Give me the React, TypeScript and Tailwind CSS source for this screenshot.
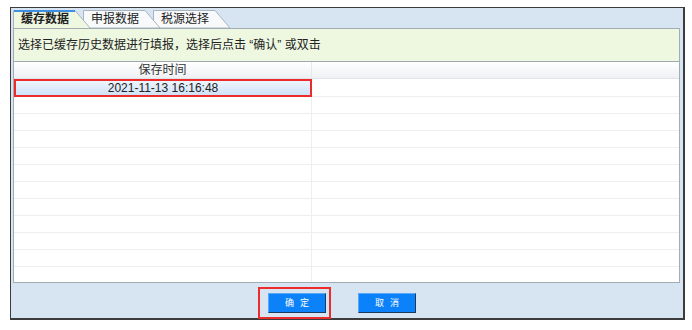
import React from 'react';

const tabs = ['缓存数据', '申报数据', '税源选择'];

function Tab({ label, active, z }: { label: string; active: boolean; z: string }) {
  return (
    <div className={`relative h-[18px] w-[78px] -mr-[8px] ${z}`}>
      <svg className="absolute inset-0" width="78" height="18" viewBox="0 0 78 18">
        <polygon
          points="0.5,18 0.5,0.5 62,0.5 77,18"
          fill={active ? '#eef8e1' : '#f7f9fb'}
          stroke="#a9b4bf"
          strokeWidth="1"
        />
        {active && <line x1="1" y1="1" x2="62" y2="1" stroke="#3d8fe0" strokeWidth="2" />}
        {active && <line x1="1" y1="18" x2="76" y2="18" stroke="#eef8e1" strokeWidth="2" />}
      </svg>
      <span
        className={`relative block pl-[8px] pt-[1px] text-[12px] leading-[16px] text-[#222] ${active ? 'font-bold' : ''}`}
      >
        {label}
      </span>
    </div>
  );
}

const btn =
  'block w-[58px] h-[20px] bg-[#0b82fa] border border-[#5aa8f5] border-r-[#1a3a5e] border-b-[#1a3a5e] text-white text-[9px] leading-[18px] tracking-[6px] pl-[6px]';

export default function App() {
  const rows = Array.from({ length: 11 });
  return (
    <div
      className="w-[692px] h-[330px] bg-white overflow-hidden"
      style={{ fontFamily: '"Liberation Sans", "Noto Sans CJK SC", sans-serif' }}
    >
      {/* Dialog frame */}
      <div className="ml-[10px] mt-[7px] w-[675px] h-[313px] border border-[#3c3c3c] border-r-2 border-b-2 bg-[#d7e4f1] flex flex-col pl-[2px] pr-[3px]">
        {/* Tabs */}
        <div className="flex items-end h-[20px] pt-[2px]">
          <Tab label={tabs[0]} active z="z-30" />
          <Tab label={tabs[1]} active={false} z="z-20" />
          <Tab label={tabs[2]} active={false} z="z-10" />
        </div>

        {/* Content panel */}
        <div className="flex flex-col h-[255px] border border-[#a3abb3] bg-white">
          <div className="h-[33px] bg-[#eef8e1] border-b border-[#a0a8b0] px-[4px] flex items-center text-[12px] text-[#222]">
            选择已缓存历史数据进行填报，选择后点击 “确认” 或双击
          </div>

          <div className="flex-1 overflow-hidden">
            {/* Header */}
            <div className="flex h-[17px] bg-gradient-to-b from-white to-[#eef1f4] border-b border-[#dfe3e7]">
              <div className="w-[298px] border-r border-[#e6e9ec] text-center text-[12px] leading-[17px] text-[#333]">
                保存时间
              </div>
              <div className="flex-1" />
            </div>

            {/* Selected row */}
            <div className="flex h-[18px]">
              <div className="w-[298px] border-2 border-[#ee2b2b] bg-gradient-to-b from-[#eef5fd] to-[#cfe2f8] text-center text-[12px] leading-[14px] text-[#222]">
                2021-11-13 16:16:48
              </div>
              <div className="flex-1 border-b border-[#eeeeee]" />
            </div>

            {rows.map((_, i) => (
              <div key={i} className="flex h-[17px] border-b border-[#eeeeee]">
                <div className="w-[298px] border-r border-[#eeeeee]" />
                <div className="flex-1" />
              </div>
            ))}
          </div>
        </div>

        {/* Buttons */}
        <div className="flex-1 flex items-start pt-[4px] pl-[245px] gap-[27px]">
          <div className="border-2 border-[#ee2b2b] pl-[8px] pr-[3px] py-[4px]">
            <button className={btn}>确定</button>
          </div>
          <div className="pt-[6px]">
            <button className={btn}>取消</button>
          </div>
        </div>
      </div>
    </div>
  );
}
